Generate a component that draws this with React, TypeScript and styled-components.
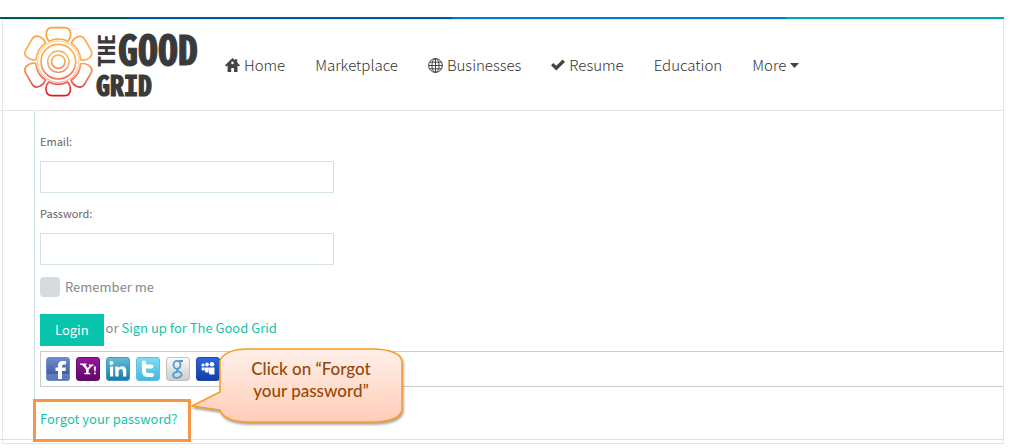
import React from "react";
import styled, { createGlobalStyle } from "styled-components";

const GlobalStyle = createGlobalStyle`
  *, *::before, *::after { box-sizing: border-box; }
  body {
    margin: 0;
    background: #fff;
    color: #666;
    font-family: "Noto Sans CJK SC", "Noto Sans", sans-serif;
    font-size: 13px;
    line-height: 20px;
  }
`;

const Page = styled.div`
  padding: 17px 21px 4px 0;
`;

const Stripe = styled.div`
  display: flex;
  height: 2px;
`;

const StripePart = styled.span<{ $color: string; $grow: number }>`
  flex: ${(p) => p.$grow} 1 0;
  background: ${(p) => p.$color};
`;

const Frame = styled.div`
  margin-left: 2px;
  padding-bottom: 3px;
  border: 1px solid #e5e5e5;
`;

const Header = styled.header`
  display: flex;
  align-items: center;
  gap: 27px;
  height: 91px;
  margin-left: -3px;
  padding-left: 25px;
  border-bottom: 1px solid #e5e5e5;
`;

const LogoLink = styled.a`
  display: block;
  height: 72px;
  margin-bottom: 6px;
`;

const LogoImage = styled.svg`
  display: block;
  overflow: visible;
`;

const Nav = styled.nav`
  display: flex;
  gap: 30px;
`;

const NavLink = styled.a`
  display: flex;
  align-items: center;
  gap: 4px;
  color: #333;
  font-size: 15px;
  font-weight: 300;
  line-height: 24px;
  text-decoration: none;
`;

const Content = styled.main`
  margin-left: -3px;
  padding-left: 34px;
  border-bottom: 1px solid #d5e3e6;
`;

const Form = styled.form`
  display: flex;
  flex-direction: column;
  align-items: flex-start;
  padding: 22px 0 10px 5px;
  border-left: 1px solid #cfe3e6;
`;

const Field = styled.div`
  display: flex;
  flex-direction: column;
  gap: 12px;
  margin-bottom: 12px;
`;

const Label = styled.label`
  font-size: 11px;
  line-height: 16px;
`;

const TextInput = styled.input`
  width: 294px;
  height: 32px;
  padding: 4px 8px;
  border: 1px solid #d3e3e5;
  background: #fff;
  font: inherit;
`;

const Remember = styled.label`
  display: flex;
  align-items: center;
  gap: 5px;
  margin-bottom: 17px;
  color: #888;
`;

const Checkbox = styled.input`
  appearance: none;
  width: 20px;
  height: 20px;
  margin: 0;
  border-radius: 4px;
  background: #d5dbde;
  &:checked { background: #08c4ac; }
`;

const Actions = styled.div`
  display: flex;
  align-items: flex-start;
  gap: 2px;
  margin-bottom: 5px;
  color: #888;
  line-height: 28px;
`;

const LoginButton = styled.button`
  height: 32px;
  padding: 0 15px;
  border: 0;
  background: #08c4ac;
  color: #fff;
  font: inherit;
`;

const TextLink = styled.a`
  color: #14c3aa;
  text-decoration: none;
`;

const SocialBar = styled.div`
  display: flex;
  align-self: stretch;
  gap: 6px;
  padding: 5px;
  border: 1px solid #ccc;
  border-right: 0;
`;

const SocialLink = styled.a`
  display: block;
  width: 24px;
  height: 24px;
`;

const Forgot = styled.div`
  position: relative;
  margin-top: 22px;
`;

const Highlight = styled.span`
  position: absolute;
  inset: -10px -13px -13px -7px;
  border: 3px solid #f79646;
  pointer-events: none;
`;

const Callout = styled.aside`
  position: absolute;
  z-index: 1;
  left: 150px;
  bottom: -3px;
  width: 216px;
  height: 84px;
  padding: 10px 26px 0 52px;
  color: #974806;
  font-family: Lato, sans-serif;
  font-size: 17px;
  font-weight: 500;
  line-height: 22px;
  text-align: center;
`;

const Bubble = styled.svg`
  position: absolute;
  inset: 0;
  z-index: -1;
`;

const CalloutText = styled.p`
  margin: 0;
`;

function Logo() {
  const petal =
    "M147 124 Q138 114 139 101 Q140 83 156 83 H194 Q210 83 212 101 Q213 114 204 124 Q190 117 175 117 Q160 117 147 124Z";
  return (
    <LogoImage width="173" height="72" viewBox="0 0 173 72" role="img" aria-label="The Good Grid">
      <defs>
        <linearGradient id="sunset" x1="0" y1="0" x2="0" y2="1">
          <stop offset="0" stopColor="#ff9f2e" />
          <stop offset="0.45" stopColor="#fbb15c" />
          <stop offset="0.75" stopColor="#ee6b55" />
          <stop offset="1" stopColor="#e30a20" />
        </linearGradient>
        <mask id="flower" maskUnits="userSpaceOnUse" x="-2" y="0" width="72" height="72">
          <g transform="translate(-25 -26) scale(0.3333)" fill="none" stroke="#fff" strokeWidth="5">
            {[0, 60, 120, 180, 240, 300].map((angle) => (
              <path key={angle} d={petal} transform={`rotate(${angle} 175 185)`} />
            ))}
            <circle cx="175" cy="185" r="62" strokeWidth="2" />
            <circle cx="175" cy="185" r="52" />
            <circle cx="175" cy="185" r="32" strokeWidth="4" />
            <circle cx="175" cy="185" r="20" />
          </g>
        </mask>
      </defs>
      <rect x="-2" width="72" height="72" fill="url(#sunset)" mask="url(#flower)" />
      <g fill="#3a3a3a" fontFamily="'Noto Sans Mono CJK SC', 'DejaVu Sans Mono', monospace" fontWeight="700">
        <text x="93" y="39" fontSize="40" stroke="#3a3a3a">GOOD</text>
        <text x="71" y="70" fontSize="28" stroke="#3a3a3a">GRID</text>
        <text transform="translate(90 41) rotate(-90)" fontSize="22">THE</text>
      </g>
    </LogoImage>
  );
}

const HomeIcon = () => (
  <svg width="15" height="15" viewBox="0 0 15 15" aria-hidden="true">
    <path
      fill="#444"
      fillRule="evenodd"
      d="M7.500 0 L10 2.300 V1.200 H12.200 V4.400 L15 7.200 L13.800 8.500 L12.500 7.600 V14 H9 V10 H6.200 V14 H2.600 V7.600 L1.200 8.500 L0 7.200Z M7.500 3.600 A1.300 1.300 0 1 0 7.500 6.200 A1.300 1.300 0 1 0 7.500 3.600Z"
    />
  </svg>
);

const GlobeIcon = () => (
  <svg width="15" height="15" viewBox="0 0 15 15" fill="none" stroke="#444" aria-hidden="true">
    <circle cx="7.500" cy="7.500" r="6.900" />
    <ellipse cx="7.500" cy="7.500" rx="3.600" ry="6.900" />
    <path d="M7.500 0.500 V14.500 M0.500 7.500 H14.500 M1.500 4.200 H13.500 M1.500 10.800 H13.500" />
  </svg>
);

const CheckIcon = () => (
  <svg width="14" height="12" viewBox="0 0 14 12" aria-hidden="true">
    <path fill="#444" d="M0 6.300 L2.300 4 L5.300 6.800 L11.600 0.600 L14 2.900 L5.300 11.500Z" />
  </svg>
);

const CaretIcon = () => (
  <svg width="9" height="5" viewBox="0 0 9 5" aria-hidden="true">
    <path fill="#444" d="M0 0 H9 L4.500 5Z" />
  </svg>
);

interface Tile {
  name: string;
  top: string;
  bottom: string;
  edge: string;
  glyph: React.ReactNode;
}

const tiles: Tile[] = [
  {
    name: "Facebook",
    top: "#6f8fcb",
    bottom: "#2b4a98",
    edge: "#6d8bc6",
    glyph: (
      <>
        <path d="M1 17 H23 V21 Q23 23 21 23 H3 Q1 23 1 21Z" fill="#7d9bd6" opacity=".55" />
        <path d="M12 22 V14 H9.500 V10.500 H12 V8.500 Q12 4 16.500 4 H20 V7.500 H17.500 Q16 7.500 16 9 V10.500 H20 L19.500 14 H16 V22Z" fill="#fff" />
      </>
    ),
  },
  {
    name: "Yahoo",
    top: "#97189a",
    bottom: "#5d0869",
    edge: "#6b0c73",
    glyph: (
      <path
        fill="#fff"
        d="M4 6.500 H10.500 V7.800 H9.300 L11.700 11 L14 8.800 H12.800 V7.600 H17.500 V8.800 H16.300 L12.700 12.500 V16 H14.300 V17.300 H8.300 V16 H10 V12.600 L6 7.800 H4Z M17.800 9.500 H20 L19.500 14.500 H18.400Z M18 15.500 H19.700 V17.300 H18Z"
      />
    ),
  },
  {
    name: "LinkedIn",
    top: "#64bdda",
    bottom: "#1878a8",
    edge: "#3f9dc2",
    glyph: (
      <g fill="#fff">
        <circle cx="5.500" cy="6" r="2" />
        <path d="M4 9.500 H7.200 V19.500 H4Z M9.300 9.500 H12.300 V11 Q13.500 9.200 16 9.200 Q20.300 9.200 20.300 14 V19.500 H17 V14.500 Q17 12 14.900 12 Q12.600 12 12.600 14.700 V19.500 H9.300Z" />
      </g>
    ),
  },
  {
    name: "Twitter",
    top: "#83dcf0",
    bottom: "#43b7df",
    edge: "#62bfdc",
    glyph: (
      <path
        fill="none"
        stroke="#fff"
        strokeWidth="4"
        strokeLinecap="round"
        strokeLinejoin="round"
        d="M8 5.500 V14 Q8 18 12 18 H16 M8 9.500 H15.500"
      />
    ),
  },
  {
    name: "Google",
    top: "#fafafa",
    bottom: "#cccccc",
    edge: "#c2c2c2",
    glyph: (
      <g fill="none" stroke="#4b9ed2" strokeWidth="1.800">
        <ellipse cx="11" cy="7.800" rx="3.500" ry="4" />
        <path d="M13 4 H17 M13.500 11 Q9 13 12 14.200 Q16.500 16 15.500 18.500 Q14 21 10.500 20.800 Q6.500 20.500 7 17.500 Q8 14.800 12 14.800" />
      </g>
    ),
  },
  {
    name: "Myspace",
    top: "#2d68dc",
    bottom: "#123d9e",
    edge: "#1a4eb7",
    glyph: (
      <g fill="#fff">
        <circle cx="7" cy="8" r="1.600" />
        <circle cx="11" cy="7.500" r="1.900" />
        <circle cx="16" cy="7.300" r="2.300" />
        <path d="M5.500 10.500 H8.500 V13.500 H7 Q5.500 13.500 5.500 12Z M8.500 10.500 H12.500 V15.500 H10.500 Q9 15.500 9 14Z M12.500 10.500 H18.500 V17.500 H14.500 Q13 17.500 13 16Z" />
      </g>
    ),
  },
];

function SocialTile({ tile }: { tile: Tile }) {
  const id = `tile-${tile.name}`;
  return (
    <SocialLink href="#" aria-label={tile.name}>
      <svg width="24" height="24" viewBox="0 0 24 24" aria-hidden="true">
        <defs>
          <linearGradient id={id} x1="0" y1="0" x2="0" y2="1">
            <stop offset="0" stopColor={tile.top} />
            <stop offset="1" stopColor={tile.bottom} />
          </linearGradient>
        </defs>
        <rect x="0.500" y="0.500" width="23" height="23" rx="2.500" fill={`url(#${id})`} stroke={tile.edge} />
        {tile.glyph}
      </svg>
    </SocialLink>
  );
}

function HelpCallout() {
  return (
    <Callout>
      <Bubble width="216" height="84" viewBox="0 0 216 84" aria-hidden="true">
        <defs>
          <linearGradient id="peach" x1="0" y1="0" x2="0" y2="1">
            <stop offset="0" stopColor="#fff0ea" />
            <stop offset="1" stopColor="#ffcdb8" />
          </linearGradient>
          <filter id="drop" x="-5%" y="-5%" width="110%" height="120%">
            <feDropShadow dx="1" dy="2" stdDeviation="1" floodColor="#555" floodOpacity="0.55" />
          </filter>
        </defs>
        <path
          d="M30 13 C32 6 42 1 58 1 H182 C200 1 212 6 212 14 V62 C210 70 200 74 182 74 H58 C42 74 32 69 30 62 L2 58 L30 44Z"
          fill="url(#peach)"
          stroke="#f99d1c"
          strokeWidth="1.500"
          strokeLinejoin="round"
          filter="url(#drop)"
        />
      </Bubble>
      <CalloutText>Click on “Forgot your password”</CalloutText>
    </Callout>
  );
}

export default function App() {
  return (
    <>
      <GlobalStyle />
      <Page>
        <Stripe>
          <StripePart $color="#005a50" $grow={127} />
          <StripePart $color="#0054a6" $grow={325} />
          <StripePart $color="#0078d4" $grow={334} />
          <StripePart $color="#00a5b5" $grow={218} />
        </Stripe>
        <Frame>
          <Header>
            <LogoLink href="#">
              <Logo />
            </LogoLink>
            <Nav>
              <NavLink href="#"><HomeIcon />Home</NavLink>
              <NavLink href="#">Marketplace</NavLink>
              <NavLink href="#"><GlobeIcon />Businesses</NavLink>
              <NavLink href="#"><CheckIcon />Resume</NavLink>
              <NavLink href="#">Education</NavLink>
              <NavLink href="#">More<CaretIcon /></NavLink>
            </Nav>
          </Header>
          <Content>
            <Form onSubmit={(e) => e.preventDefault()}>
              <Field>
                <Label htmlFor="email">Email:</Label>
                <TextInput id="email" type="email" />
              </Field>
              <Field>
                <Label htmlFor="password">Password:</Label>
                <TextInput id="password" type="password" />
              </Field>
              <Remember>
                <Checkbox type="checkbox" />
                Remember me
              </Remember>
              <Actions>
                <LoginButton type="submit">Login</LoginButton>
                <span>
                  or <TextLink href="#">Sign up for The Good Grid</TextLink>
                </span>
              </Actions>
              <SocialBar>
                {tiles.map((tile) => (
                  <SocialTile key={tile.name} tile={tile} />
                ))}
              </SocialBar>
              <Forgot>
                <TextLink href="#">Forgot your password?</TextLink>
                <Highlight />
                <HelpCallout />
              </Forgot>
            </Form>
          </Content>
        </Frame>
      </Page>
    </>
  );
}
